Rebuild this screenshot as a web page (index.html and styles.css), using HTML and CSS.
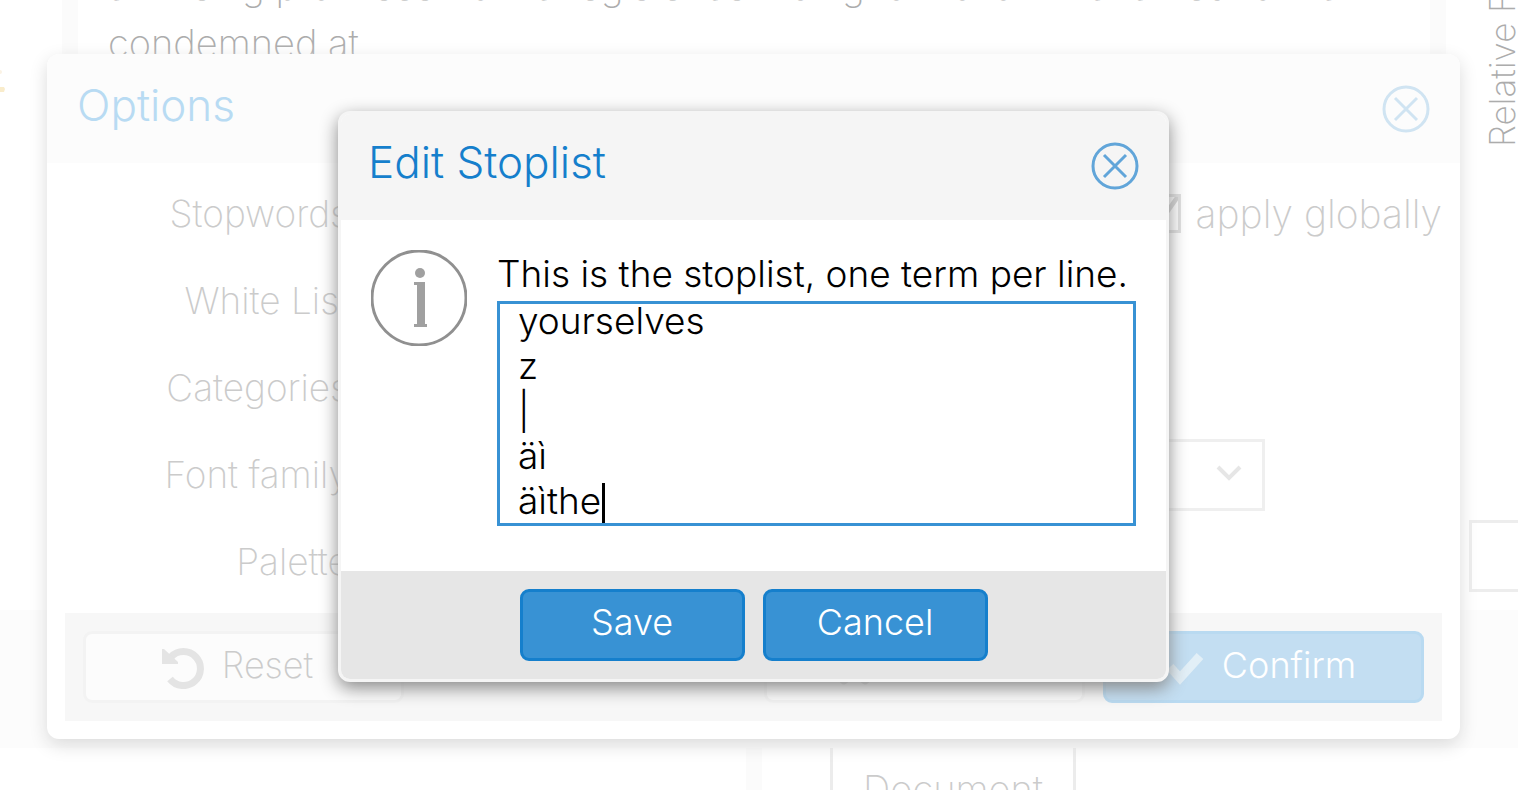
FILE: index.html
```
<!DOCTYPE html>
<html lang="en">
<head>
<meta charset="utf-8">
<title>Edit Stoplist</title>
<link rel="stylesheet" href="styles.css">
</head>
<body>
<main class="workspace">
  <section class="upper">
    <div class="cloud">
      <svg width="6" height="24" viewBox="0 0 6 24" aria-hidden="true"><circle cx="0" cy="2" r="2" fill="#fbf3e4"/><path d="M0 17h4l1 2-1 3H0z" fill="#f9eccb"/></svg>
    </div>
    <article class="reader">
      <p>accusing promises from a register ascribing to motion in a famed format<br>condemned at</p>
    </article>
    <aside class="trends">
      <span class="axis">Relative Fr</span>
      <span class="trend-box"></span>
    </aside>
  </section>
  <div class="band"></div>
  <section class="lower">
    <div class="summary"></div>
    <div class="contexts"><div class="tab">Document</div></div>
  </section>
</main>

<div class="overlay">
  <section class="options" aria-label="Options">
    <header class="head">
      <h2>Options</h2>
      <button class="close" aria-label="Close options">
        <svg viewBox="0 0 48 48"><circle cx="24" cy="24" r="22"/><path d="M13 13l22 22M35 13L13 35"/></svg>
      </button>
    </header>
    <div class="rows">
      <div class="row"><span class="label">Stopwords:</span><label class="check"><input type="checkbox" checked>apply globally</label></div>
      <div class="row"><span class="label">White List:</span></div>
      <div class="row"><span class="label">Categories:</span></div>
      <div class="row"><label class="label" for="family">Font family:</label>
        <div class="pick"><select id="family"></select><svg width="28" height="20" viewBox="0 0 28 20" aria-hidden="true"><path d="M3 3l11 11L25 3"/></svg></div></div>
      <div class="row"><span class="label">Palette:</span></div>
    </div>
    <footer class="tools">
      <button class="tool">
        <svg width="42" height="42" viewBox="0 0 42 42" aria-hidden="true"><path d="M9 10A17 17 0 1 1 8 32" fill="none" stroke="#e4e4e4" stroke-width="7"/><path d="M0 2h2l14 13v2H0z" fill="#e4e4e4"/></svg>
        Reset
      </button>
      <span class="space"></span>
      <button class="tool" aria-label="Cancel">
        <svg width="42" height="42" viewBox="0 0 42 42" aria-hidden="true"><path d="M12 10l21 23M33 10L12 33" fill="none" stroke="#dcdcdc" stroke-width="9" stroke-linecap="round"/></svg>
        <span class="fill"></span>
      </button>
      <button class="tool primary">
        <svg width="42" height="42" viewBox="0 0 42 42" aria-hidden="true"><path d="M8 20l10 11L38 9" fill="none" stroke="#e2eff7" stroke-width="9"/></svg>
        Confirm
      </button>
    </footer>
  </section>
</div>

<div class="overlay">
  <section class="dialog" role="dialog" aria-label="Edit Stoplist">
    <header class="head">
      <h1>Edit Stoplist</h1>
      <button class="close" aria-label="Close">
        <svg viewBox="0 0 48 48"><circle cx="24" cy="24" r="22"/><path d="M13 13l22 22M35 13L13 35"/></svg>
      </button>
    </header>
    <div class="content">
      <svg class="info" viewBox="0 0 96 96" aria-hidden="true"><circle cx="48" cy="48" r="47" fill="none" stroke="#909090" stroke-width="3"/><circle cx="49" cy="23" r="5" fill="#a0a0a0"/><path d="M43 32h11v42h2v3H43v-3h3V35h-3z" fill="#a0a0a0"/></svg>
      <div class="field">
        <label for="stoplist">This is the stoplist, one term per line.</label>
        <div class="box">
          <textarea id="stoplist" spellcheck="false">yourselves
z
|
äì
äìthe</textarea>
          <span class="caret"></span>
        </div>
      </div>
    </div>
    <footer class="actions">
      <button class="action">Save</button>
      <button class="action">Cancel</button>
    </footer>
  </section>
</div>
<script src="script.js"></script>
</body>
</html>
```
FILE: styles.css
```
* { box-sizing: border-box; }
body {
  margin: 0;
  min-height: 100vh;
  overflow: hidden;
  background: #fff;
  font-family: Inter, "Liberation Sans", sans-serif;
  font-weight: 300;
  font-size: 37px;
}
h1, h2, p { margin: 0; font-weight: 300; }
button, textarea, select { font: inherit; }

.workspace { height: 100vh; display: flex; flex-direction: column; color: #acacac; }
.upper { flex: 0 0 610px; display: flex; }
.cloud { width: 62px; padding-top: 70px; }
.cloud svg { display: block; }
.reader {
  flex: 1;
  height: 72px;
  display: flex;
  align-items: flex-end;
  overflow: hidden;
  padding: 0 30px;
  border: solid #fbfbfb;
  border-width: 0 16px;
}
.reader p { font-size: 38px; line-height: 57px; font-weight: 200; white-space: nowrap; }
.trends {
  width: 72px;
  display: flex;
  flex-direction: column;
  justify-content: space-between;
  padding: 0 0 18px 23px;
  overflow: hidden;
}
.axis {
  height: 147px;
  margin-left: 15px;
  font-size: 35px;
  font-weight: 200;
  line-height: 36px;
  writing-mode: vertical-rl;
  transform: rotate(180deg);
  white-space: nowrap;
  align-self: flex-start;
}
.trend-box { height: 72px; width: 72px; border: 3px solid #ededed; }
.band { flex: 0 0 138px; background: #fcfcfc; }
.lower { flex: 1; display: flex; overflow: hidden; }
.summary { width: 762px; border-right: 16px solid #fbfbfb; }
.contexts { flex: 1; padding-left: 68px; }
.tab {
  width: 246px;
  height: 90px;
  border: solid #ececec;
  border-width: 0 3px;
  color: #cbcbcb;
  font-size: 38px;
  font-weight: 200;
  text-align: center;
  line-height: 82px;
}

.overlay {
  position: absolute;
  inset: 0;
  display: flex;
  justify-content: center;
  align-items: flex-start;
  padding-right: 11px;
}
.head { display: flex; justify-content: space-between; align-items: flex-start; }
h1, h2 { font-size: 44px; line-height: 40px; }
.close { width: 48px; height: 48px; padding: 0; border: 0; background: none; }
.close svg { display: block; fill: none; stroke: #61a5d9; stroke-width: 3; }

.options {
  width: 1413px;
  margin-top: 54px;
  padding-bottom: 18px;
  border-radius: 12px;
  background: #fff;
  box-shadow: 0 6px 18px #dbdbdb;
  color: #cbcbcb;
  font-weight: 200;
}
.options .head { padding: 31px 30px 30px; background: #fcfcfc; border-radius: 12px 12px 0 0; }
.options h2 { color: #b8dbf3; }
.options .close svg { stroke: #d0e4f2; }
.rows { display: grid; gap: 15px; padding: 15px 18px; }
.row { height: 72px; display: flex; align-items: center; padding-bottom: 2px; }
.label { width: 294px; text-align: right; }
.check { margin-left: auto; display: flex; align-items: center; gap: 15px; font-size: 39px; }
.check input {
  appearance: none;
  width: 39px;
  height: 39px;
  margin: 0;
  border: 3px solid #e0e0e0;
  background: linear-gradient(125deg, transparent 52%, #d4d4d4 54%, #d4d4d4 62%, transparent 64%);
}
.pick { position: relative; margin-left: 15px; width: 891px; height: 72px; align-self: flex-start; }
.pick select {
  width: 100%;
  height: 100%;
  appearance: none;
  border: 3px solid #efefef;
  border-radius: 0;
  background: #fff;
}
.pick svg { position: absolute; right: 22px; top: 25px; fill: none; stroke: #e6e6e6; stroke-width: 4; }
.tools { display: flex; gap: 18px; margin: 0 18px; padding: 18px; background: #f7f7f7; }
.space { flex: 1; }
.tool {
  width: 321px;
  height: 72px;
  display: flex;
  align-items: center;
  justify-content: center;
  gap: 18px;
  padding: 0 12px 4px 0;
  border: 3px solid #f3f3f3;
  border-radius: 9px;
  background: #fcfcfc;
  color: #cbcbcb;
  font-size: 36px;
}
.tool svg { margin-top: 6px; }
.fill { width: 114px; }
.primary { padding-right: 9px; background: #c3def2; border-color: #b9daf1; color: #fff; font-weight: 300; }

.dialog {
  width: 831px;
  margin-top: 111px;
  border: 3px solid #f5f5f5;
  border-radius: 12px;
  background: #fff;
  box-shadow: 0 6px 18px #888;
  overflow: hidden;
}
.dialog .head { padding: 28px 27px 30px; background: #f5f5f5; }
h1 { color: #157fcc; }
.content { display: flex; gap: 30px; padding: 30px 30px 45px; }
.info { flex: none; width: 96px; height: 96px; }
.field { flex: 1; }
.field label { display: block; line-height: 48px; margin-bottom: 3px; white-space: nowrap; color: #000; }
.box { position: relative; }
textarea {
  display: block;
  width: 100%;
  height: 225px;
  padding: 0 18px;
  border: 3px solid #3892d4;
  border-radius: 0;
  outline: 0;
  resize: none;
  overflow: hidden;
  line-height: 45px;
  color: #000;
  caret-color: transparent;
}
.caret { position: absolute; left: 105px; bottom: 3px; width: 3px; height: 40px; background: #000; }
.actions { display: flex; justify-content: center; gap: 18px; padding: 18px; background: #e6e6e6; }
.action {
  width: 225px;
  height: 72px;
  padding: 0 0 6px;
  border: 3px solid #157fcc;
  border-radius: 9px;
  background: #3892d4;
  color: #fff;
  font-size: 36px;
}
```
FILE: script.js
```
const list = document.getElementById('stoplist');
list.scrollTop = list.scrollHeight;
```
